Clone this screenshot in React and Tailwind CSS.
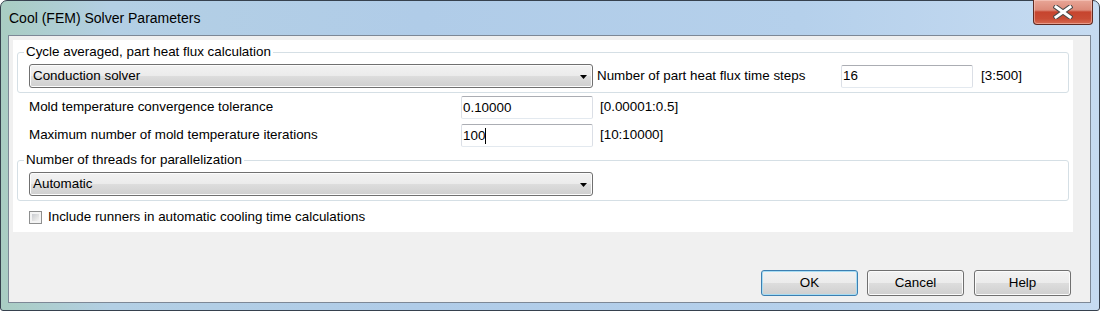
import React from 'react';

const font = { fontFamily: '"Liberation Sans", Arial, sans-serif' };

const ComboBox = ({ value }) => (
    <div className="w-[564px] h-[24px] flex items-center justify-between border border-[#707070] rounded-[3px] bg-[linear-gradient(180deg,#f2f2f2_0%,#ebebeb_50%,#dddddd_50%,#cfcfcf_100%)] pl-[3px] pr-[5px] shadow-[inset_0_0_0_1px_#fcfcfc]">
        <span className="text-[13.4px] leading-none text-black">{value}</span>
        <svg width="7" height="4" viewBox="0 0 7 4" className="mt-[1px]">
            <path d="M0 0 H7 L3.5 4 Z" fill="#000" />
        </svg>
    </div>
);

const TextBox = ({ value, caret }) => (
    <div className="w-[132px] h-[23px] flex items-center border border-t-[#abadb3] border-l-[#dbdfe6] border-r-[#dbdfe6] border-b-[#e3e9ef] rounded-[2px] bg-white pl-[1px]">
        <span className="text-[13.4px] leading-none text-black">{value}</span>
        {caret && <span className="inline-block w-px h-[16px] bg-black" />}
    </div>
);

const Group = ({ legend, children }) => (
    <fieldset className="border border-[#d5dfe5] rounded-[3px] p-0 m-0 min-w-0">
        <legend className="ml-[6px] px-[2px] text-[13.4px] leading-[16px] text-black">{legend}</legend>
        <div className="pl-[11px] pt-[4px] pb-[4px]">{children}</div>
    </fieldset>
);

const Button = ({ label, isDefault }) => (
    <div
        className={
            isDefault
                ? 'w-[97px] h-[26px] flex items-center justify-center rounded-[3px] border border-[#3c7fb1] shadow-[inset_0_0_0_1px_#a7dcf3] bg-[linear-gradient(180deg,#f2f2f2_0%,#ebebeb_50%,#dddddd_50%,#cfcfcf_100%)] text-[13.4px] text-black'
                : 'w-[97px] h-[26px] flex items-center justify-center rounded-[3px] border border-[#707070] shadow-[inset_0_0_0_1px_#fbfbfb] bg-[linear-gradient(180deg,#f2f2f2_0%,#ebebeb_50%,#dddddd_50%,#cfcfcf_100%)] text-[13.4px] text-black'
        }
    >
        {label}
    </div>
);

export default function App() {
    return (
        <div className="w-[1100px] h-[311px] bg-white" style={font}>
            <div className="w-full h-full flex flex-col border border-[#36414e] rounded-t-[7px] rounded-b-[3px] bg-[linear-gradient(90deg,#a9cdc2_0px,#b3cfe4_110px,#b0cce8_420px,#b5d0eb_800px,#c6dbf1_1100px)] pl-[7px] pr-[8px] pb-[7px]">
                {/* title bar */}
                <div className="h-[34px] flex items-start justify-between">
                    <div className="pl-[1px] pt-[9px] text-[14px] leading-[16px] text-black">Cool (FEM) Solver Parameters</div>
                    <div className="-mt-px mr-[-2px] w-[60px] h-[25px] rounded-b-[4px] border border-[#5f2a22] border-t-0 bg-[linear-gradient(180deg,#e8a697_0%,#dc8a79_42%,#c6442e_50%,#c94c35_78%,#d66a52_100%)] shadow-[inset_0_0_0_1px_rgba(255,220,210,0.45)] flex items-center justify-center">
                        <svg width="20" height="14" viewBox="0 0 20 14">
                            <path d="M3 2 L17 12 M17 2 L3 12" stroke="#4a4a4a" strokeWidth="5" strokeLinecap="square" />
                            <path d="M3 2 L17 12 M17 2 L3 12" stroke="#ffffff" strokeWidth="3" strokeLinecap="square" />
                        </svg>
                    </div>
                </div>

                {/* client area */}
                <div className="flex-1 flex flex-col border border-[#7d8896] bg-[#f0f0f0]">
                    <div className="ml-[4px] mt-[4px] w-[1060px] h-[192px] bg-white px-[4px] pt-[4px]">
                        <Group legend="Cycle averaged, part heat flux calculation">
                            <div className="flex items-center">
                                <ComboBox value="Conduction solver" />
                                <span className="ml-[4px] w-[244px] text-[13.4px] text-black">Number of part heat flux time steps</span>
                                <TextBox value="16" />
                                <span className="ml-[8px] text-[13.4px] text-black">[3:500]</span>
                            </div>
                        </Group>

                        <div className="pl-[12px] pt-[3px] flex flex-col gap-[5px]">
                            <div className="flex items-center">
                                <span className="w-[432px] text-[13.4px] text-black">Mold temperature convergence tolerance</span>
                                <TextBox value="0.10000" />
                                <span className="ml-[7px] text-[13.4px] text-black">[0.00001:0.5]</span>
                            </div>
                            <div className="flex items-center">
                                <span className="w-[432px] text-[13.4px] text-black">Maximum number of mold temperature iterations</span>
                                <TextBox value="100" caret />
                                <span className="ml-[7px] text-[13.4px] text-black">[10:10000]</span>
                            </div>
                        </div>

                        <div className="mt-[5px]">
                            <Group legend="Number of threads for parallelization">
                                <ComboBox value="Automatic" />
                            </Group>
                        </div>

                        <div className="pl-[12px] mt-[8px] flex items-center">
                            <div className="w-[13px] h-[13px] border border-[#8e8f8f] bg-[#f4f4f4] p-[2px]">
                                <div className="w-full h-full bg-[linear-gradient(135deg,#c9ccd1_0%,#e4e4e4_60%,#f4f4f4_100%)]" />
                            </div>
                            <span className="ml-[6px] text-[13.4px] leading-[16px] text-black">Include runners in automatic cooling time calculations</span>
                        </div>
                    </div>

                    <div className="flex-1 flex items-end justify-end pr-[19px] pb-[6px]">
                        <Button label="OK" isDefault />
                        <div className="ml-[9px]">
                            <Button label="Cancel" />
                        </div>
                        <div className="ml-[10px]">
                            <Button label="Help" />
                        </div>
                    </div>
                </div>
            </div>
        </div>
    );
}
